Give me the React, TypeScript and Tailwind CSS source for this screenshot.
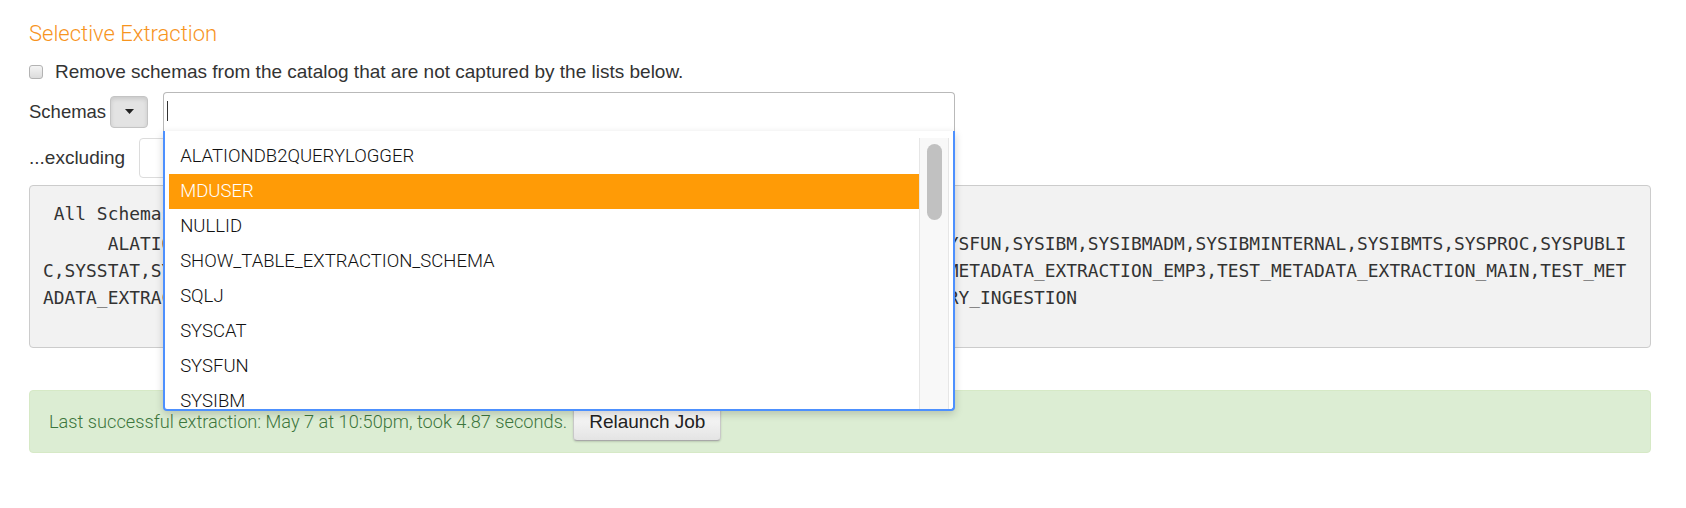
import React from 'react'

const schemas = [
  'ALATIONDB2QUERYLOGGER',
  'MDUSER',
  'NULLID',
  'SHOW_TABLE_EXTRACTION_SCHEMA',
  'SQLJ',
  'SYSCAT',
  'SYSFUN',
  'SYSIBM',
  'SYSIBMADM',
]

const preLines = [
  ' All Schemas:',
  '      ALATIONDB2QUERYLOGGER,MDUSER,NULLID,SHOW_TABLE_EXTRACTION_SCHEMA,SQLJ,SYSCAT,SYSFUN,SYSIBM,SYSIBMADM,SYSIBMINTERNAL,SYSIBMTS,SYSPROC,SYSPUBLI',
  'C,SYSSTAT,SYSTOOLS,TEST_METADATA_EXTRACTION_EMP1,TEST_METADATA_EXTRACTION_EMP2,TEST_METADATA_EXTRACTION_EMP3,TEST_METADATA_EXTRACTION_MAIN,TEST_MET',
  'ADATA_EXTRACTION_SAMPLE,TEST_METADATA_EXTRACTION_VIEWS,TEST_LINEAGE_SOURCES,TEST_QUERY_INGESTION',
]

const Caret = () => (
  <svg width="9" height="5" viewBox="0 0 9 5">
    <polygon points="0,0 9,0 4.5,5" fill="#222" />
  </svg>
)

const SchemaDropdown: React.FC = () => {
  const active = 'MDUSER'
  return (
    <div className="absolute left-0 right-0 top-full z-10 h-[280px] flex rounded-b-[4px] border-2 border-t-0 border-[#4d90fe] bg-white shadow-[0_3px_8px_rgba(0,0,0,0.18)]">
      <div className="flex-1 overflow-hidden pl-[4px] pt-[8px]">
        {schemas.map((s) => (
          <div
            key={s}
            className={
              "h-[35px] flex items-center pl-[11px] font-['Roboto',sans-serif] text-[18.5px] font-light " +
              (s === active ? 'bg-[#ff9b06] text-white' : 'text-[#111]')
            }
          >
            {s}
          </div>
        ))}
      </div>
      <div className="mt-[7px] mr-[4px] w-[30px] border-l border-r border-[#e6e6e6] bg-[#f8f8f8] pt-[6px]">
        <div className="mx-auto h-[76px] w-[15px] rounded-full bg-[#c1c1c1]" />
      </div>
    </div>
  )
}

export default function App() {
  return (
    <div className="min-h-[508px] w-full bg-white pl-[29px] pr-[35px] pt-[21px] font-['Liberation_Sans',Arial,sans-serif] text-[#333]">
      <div className="h-[26px] leading-[26px] text-[22px] font-light text-[#f7941e] font-['Roboto',sans-serif]">
        Selective Extraction
      </div>

      <div className="mt-[13px] h-[24px] flex items-center">
        <span className="h-[14px] w-[14px] rounded-[3px] border border-[#b3b3b3] bg-gradient-to-b from-[#f4f4f4] to-[#dcdcdc]" />
        <span className="ml-[12px] text-[19px]">
          Remove schemas from the catalog that are not captured by the lists below.
        </span>
      </div>

      <div className="mt-[8px] h-[39px] flex items-center">
        <span className="text-[18.5px]">Schemas</span>
        <span className="ml-[4px] h-[32px] w-[38px] flex items-center justify-center rounded-[4px] border border-[#c4c4c4] bg-[#e3e3e3] shadow-[inset_0_2px_4px_rgba(0,0,0,0.12)]">
          <Caret />
        </span>
        <div className="relative ml-[15px] w-[792px] self-start">
          <div className="h-[39px] rounded-t-[4px] border border-b-0 border-[#b9b9b9] bg-white pl-[3px] pt-[8px]">
            <div className="h-[20px] w-[1px] bg-[#333]" />
          </div>
          <SchemaDropdown />
        </div>
      </div>

      <div className="mt-[7px] h-[40px] flex items-center">
        <span className="text-[19px]">...excluding</span>
        <div className="ml-[14px] h-[40px] w-[780px] rounded-[4px] border border-[#dcdcdc] bg-white" />
      </div>

      <div className="mt-[7px] h-[163px] rounded-[4px] border border-[#cccccc] bg-[#f2f2f2] pl-[13px] pt-[14px] font-['DejaVu_Sans_Mono',monospace] text-[17.9px] leading-[27px] text-[#333]">
        {preLines.map((l, i) => (
          <div key={i} className={'whitespace-pre ' + (i === 0 ? 'mb-[3px]' : '')}>
            {l}
          </div>
        ))}
      </div>

      <div className="mt-[42px] h-[63px] flex items-center rounded-[4px] border border-[#d6e9c6] bg-[#dcedd3] pl-[19px]">
        <span className="text-[18.2px] font-light text-[#3c763d] font-['Roboto',sans-serif]">
          Last successful extraction: May 7 at 10:50pm, took 4.87 seconds.
        </span>
        <button className="ml-[6px] mt-[2px] h-[37px] px-[15px] rounded-[4px] border border-[#c8c8c8] border-b-[#a8a8a8] bg-gradient-to-b from-white to-[#e4e4e4] text-[19px] text-[#222] shadow-[0_1px_2px_rgba(0,0,0,0.15)]">
          Relaunch Job
        </button>
      </div>
    </div>
  )
}
